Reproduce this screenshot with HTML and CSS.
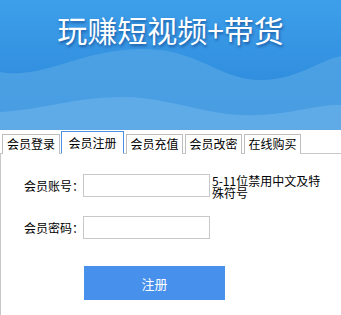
FILE: index.html
```html
<!DOCTYPE html>
<html lang="zh-CN">
<head>
	<meta charset="UTF-8">
	<title>会员注册</title>
	<link rel="stylesheet" href="styles.css">
</head>
<body>
	<div class="banner">
		<svg class="waves" width="341" height="130" viewBox="0 0 341 130">
			<defs>
				<linearGradient id="sky" x1="0" y1="0" x2="0" y2="1">
					<stop offset="0" stop-color="#3d9fea"/>
					<stop offset="1" stop-color="#2a84d8"/>
				</linearGradient>
			</defs>
			<rect width="341" height="130" fill="url(#sky)"/>
			<path d="M0 72 C40 80 80 50 140 49 C200 48 220 82 265 80 C300 78 320 60 341 56 L341 130 L0 130 Z" fill="#55a6e6" opacity="0.7"/>
			<path d="M0 112 C40 110 80 96 125 97 C175 98 210 118 260 115 C295 113 320 104 341 105 L341 130 L0 130 Z" fill="#68b0ea" opacity="0.7"/>
		</svg>
		<h1 class="title">玩赚短视频+带货</h1>
	</div>
	<ul class="tabs">
		<li class="tab">会员登录</li>
		<li class="tab active">会员注册</li>
		<li class="tab">会员充值</li>
		<li class="tab">会员改密</li>
		<li class="tab">在线购买</li>
	</ul>
	<div class="panel">
		<div class="row">
			<span class="label">会员账号：</span>
			<input class="field" type="text">
			<span class="hint">5-11位禁用中文及特殊符号</span>
		</div>
		<div class="row">
			<span class="label">会员密码：</span>
			<input class="field" type="password">
		</div>
		<button class="submit">注册</button>
	</div>
</body>
</html>
```

FILE: styles.css
```css
*{ margin:0; padding:0; list-style:none; box-sizing:border-box;}
body{ width:341px; height:315px; overflow:hidden; background:#fff; font-family:"Noto Sans CJK SC","Liberation Sans",sans-serif; font-size:12px; color:#000;}
.banner{ position:relative; height:130px; overflow:hidden;}
.waves{ display:block;}
.title{ position:absolute; left:0; top:13px; width:100%; text-align:center; color:#fff; font-size:30px; font-weight:normal; line-height:32px; text-shadow:1px 2px 3px rgba(0,40,110,.55);}
.tabs{ display:flex; align-items:flex-end; height:24px; padding-left:2px; border-bottom:1px solid #c8c8c8;}
.tab{ width:57px; height:20px; line-height:18px; text-align:center; margin-right:2px; border:1px solid #bdbdbd; border-bottom:none; background:#fff; margin-bottom:-1px; white-space:nowrap;}
.tab:first-child{ width:58px; margin-right:1px;}
.tab.active{ width:63px; height:23px; line-height:22px; border-color:#4a8fe0; position:relative; z-index:1; border-bottom:1px solid #fff;}
.panel{ height:161px; border-left:1px solid #c8c8c8; padding-top:18px;}
.row{ display:flex; align-items:center; padding-left:23px; margin-bottom:17px;}
.label{ width:59px; white-space:nowrap;}
.field{ width:127px; height:23px; border:1px solid #c8c8c8; outline:none;}
.hint{ width:116px; margin-left:2px; line-height:12px; align-self:flex-start; margin-top:3px;}
.submit{ display:block; margin:27px 0 0 83px; width:141px; height:34px; border:none; background:#4790ec; color:#fff; font-family:inherit; font-size:13px;}
```
